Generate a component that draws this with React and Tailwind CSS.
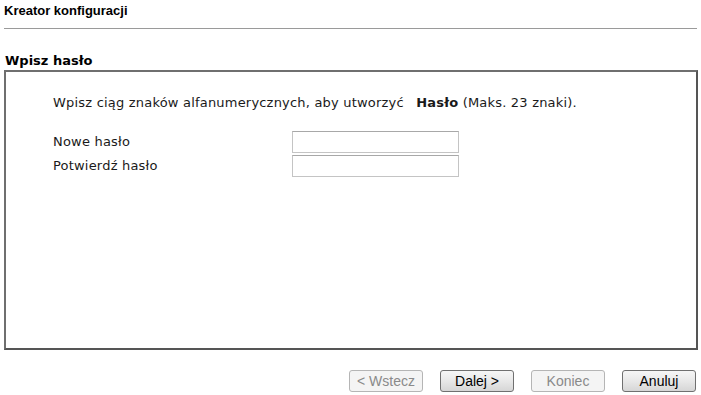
import React from "react";

const Field = ({ label }) => (
  <div className="flex items-center h-[24px]">
    <span className="w-[239px]">{label}</span>
    <input
      type="password"
      className="w-[167px] h-[22px] border border-[#c4c4c4] border-t-[#a8a8a8] bg-white outline-none"
    />
  </div>
);

const WizardButton = ({ children, disabled }) => (
  <button
    disabled={disabled}
    className={`w-[74px] h-[22px] rounded-[3px] border text-[14px] leading-none font-['Liberation_Sans',Arial,sans-serif] ${
      disabled
        ? "border-[#b5b5b5] bg-[#f4f4f4] text-[#8a8a8a]"
        : "border-[#707070] bg-gradient-to-b from-[#f6f6f6] via-[#e8e8e8] to-[#d6d6d6] text-black"
    }`}
  >
    {children}
  </button>
);

export default function App() {
  return (
    <div className="w-[701px] h-[395px] bg-white text-black overflow-hidden">
      <div className="px-[4px] pt-[3px]">
        <h1 className="text-[13px] font-bold leading-[15px] font-['Liberation_Sans',Arial,sans-serif]">
          Kreator konfiguracji
        </h1>
        <div className="mt-[10px] w-[693px] h-px bg-[#9a9a9a]" />
        <h2 className="mt-[24px] text-[13px] font-bold leading-[16px] font-['DejaVu_Sans',Verdana,sans-serif] pl-[1px]">
          Wpisz hasło
        </h2>
        <div className="mt-[1px] w-[694px] h-[280px] border-2 border-t-[#6f6f6f] border-l-[#6f6f6f] border-r-[#555] border-b-[#555] font-['DejaVu_Sans',Verdana,sans-serif] text-[13px] tracking-[0.2px] text-[#1a1a1a]">
          <div className="pl-[47px] pt-[22px]">
            <p className="leading-[18px]">
              Wpisz ciąg znaków alfanumerycznych, aby utworzyć{" "}
              <b className="ml-[8px]">Hasło</b> (Maks. 23 znaki).
            </p>
            <div className="mt-[18px] flex flex-col">
              <Field label="Nowe hasło" />
              <Field label="Potwierdź hasło" />
            </div>
          </div>
        </div>
      </div>
      <div className="mt-[20px] flex justify-end gap-[17px] pr-[5px]">
        <WizardButton disabled>&lt; Wstecz</WizardButton>
        <WizardButton>Dalej &gt;</WizardButton>
        <WizardButton disabled>Koniec</WizardButton>
        <WizardButton>Anuluj</WizardButton>
      </div>
    </div>
  );
}
